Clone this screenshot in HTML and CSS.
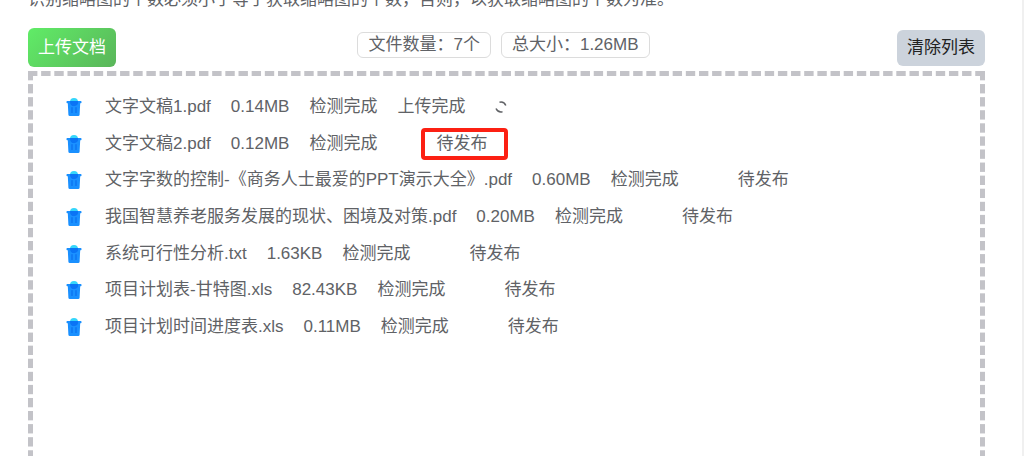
FILE: index.html
```
<!DOCTYPE html>
<html lang="zh-CN">

<head>
    <meta charset="UTF-8">
    <meta name="viewport" content="width=device-width, initial-scale=1.0">
    <title>上传文档</title>
    <link rel="stylesheet" href="styles.css">
</head>

<body>
    <!-- 删除图标 -->
    <svg class="sprite" aria-hidden="true">
        <symbol id="trash" viewBox="0 0 16 20">
            <circle cx="8" cy="5" r="4" fill="#35d6fb" />
            <path d="M1.200 4h13.600a.7.7 0 0 1 .7.7v.9a.7.7 0 0 1-.7.7H14.200l-.6 11.400a1.400 1.400 0 0 1-1.400 1.300H3.800a1.400 1.400 0 0 1-1.400-1.300L1.800 6.300H1.200a.7.7 0 0 1-.7-.7v-.9a.7.7 0 0 1 .7-.7z" fill="#1a90ff" />
            <path d="M4.100 4h7.800a4 4 0 0 1-7.800 2z" fill="#0a74f5" />
            <path d="M6 10.500v5M10 10.500v5" stroke="#0a70ee" stroke-width="1.200" stroke-linecap="round" />
        </symbol>
    </svg>

    <main class="page">
        <p class="tip">识别缩略图的个数必须小于等于获取缩略图的个数，否则，以获取缩略图的个数为准。</p>

        <div class="toolbar">
            <button type="button" class="btn upload">上传文档</button>
            <div class="summary">
                <span class="tag">文件数量：7个</span>
                <span class="tag">总大小：1.26MB</span>
            </div>
            <button type="button" class="btn clear">清除列表</button>
        </div>

        <div class="drop-area">
            <ul class="file-list">
                <li class="file">
                    <button type="button" class="delete" aria-label="删除"><svg><use href="#trash" /></svg></button>
                    <span>文字文稿1.pdf</span>
                    <span>0.14MB</span>
                    <span>检测完成</span>
                    <span>上传完成</span>
                    <svg class="loading" viewBox="0 0 12 12">
                        <path d="M4.500 1.300Q9 .2 10.800 4.500M1 7.500Q3 11.800 7.500 10.700" />
                    </svg>
                </li>
                <li class="file">
                    <button type="button" class="delete" aria-label="删除"><svg><use href="#trash" /></svg></button>
                    <span>文字文稿2.pdf</span>
                    <span>0.12MB</span>
                    <span>检测完成</span>
                    <span class="status marked">待发布</span>
                </li>
                <li class="file">
                    <button type="button" class="delete" aria-label="删除"><svg><use href="#trash" /></svg></button>
                    <span>文字字数的控制-《商务人士最爱的PPT演示大全》.pdf</span>
                    <span>0.60MB</span>
                    <span>检测完成</span>
                    <span class="status">待发布</span>
                </li>
                <li class="file">
                    <button type="button" class="delete" aria-label="删除"><svg><use href="#trash" /></svg></button>
                    <span>我国智慧养老服务发展的现状、困境及对策.pdf</span>
                    <span>0.20MB</span>
                    <span>检测完成</span>
                    <span class="status">待发布</span>
                </li>
                <li class="file">
                    <button type="button" class="delete" aria-label="删除"><svg><use href="#trash" /></svg></button>
                    <span>系统可行性分析.txt</span>
                    <span>1.63KB</span>
                    <span>检测完成</span>
                    <span class="status">待发布</span>
                </li>
                <li class="file">
                    <button type="button" class="delete" aria-label="删除"><svg><use href="#trash" /></svg></button>
                    <span>项目计划表-甘特图.xls</span>
                    <span>82.43KB</span>
                    <span>检测完成</span>
                    <span class="status">待发布</span>
                </li>
                <li class="file">
                    <button type="button" class="delete" aria-label="删除"><svg><use href="#trash" /></svg></button>
                    <span>项目计划时间进度表.xls</span>
                    <span>0.11MB</span>
                    <span>检测完成</span>
                    <span class="status">待发布</span>
                </li>
            </ul>
        </div>
    </main>
</body>

</html>
```

FILE: styles.css
```
* {
    box-sizing: border-box;
}

body {
    margin: 0;
    height: 100vh;
    overflow: hidden;
    border-right: 2px solid #f0f0f0;
    background-color: #fff;
    color: #606266;
    font-family: "Liberation Sans", "Noto Sans CJK SC", sans-serif;
    font-size: 17px;
    line-height: 24px;
}

.sprite {
    display: none;
}

/* 页面滚动到上传区域 */
.page {
    margin-top: -12px;
    padding: 0 37px 0 28px;
}

.tip {
    margin: 0 0 16px;
}

.toolbar {
    display: flex;
    justify-content: space-between;
    align-items: center;
    margin-bottom: 4px;
}

.btn {
    padding: 0 10px;
    border: none;
    border-radius: 6px;
    font: inherit;
    cursor: pointer;
}

.upload {
    height: 39px;
    background-image: linear-gradient(135deg, #60ec67, #5ab55a);
    color: #fff;
}

.clear {
    height: 36px;
    background-color: #ccd3dc;
    color: #222;
}

.summary {
    display: flex;
    gap: 10px;
    margin: 0 6px 6px 0;
}

.tag {
    padding: 0 10px;
    border: 1px solid #dcdcdc;
    border-radius: 6px;
}

/* 虚线边框，用渐变控制线段长度 */
.drop-area {
    --dash: #c3c3c8 0 9px, transparent 9px;
    min-height: 506px;
    padding: 18px 38px;
    background-image:
        linear-gradient(to right, var(--dash)),
        linear-gradient(to bottom, var(--dash)),
        linear-gradient(to bottom, var(--dash));
    background-position: left top, left top, right top;
    background-repeat: repeat-x, repeat-y, repeat-y;
    background-size:
        calc((100% - 9px) / 72) 5px,
        5px calc((100% - 9px) / 38),
        5px calc((100% - 9px) / 38);
}

.file-list {
    display: grid;
    grid-auto-rows: 1fr;
    min-height: 256px;
    margin: 0;
    padding: 0;
    list-style: none;
}

.file {
    display: flex;
    align-items: center;
    gap: 20px;
    white-space: nowrap;
}

.delete {
    width: 16px;
    height: 20px;
    margin-right: 3px;
    padding: 0;
    border: none;
    background: none;
    cursor: pointer;
}

.delete svg {
    display: block;
    width: 100%;
    height: 100%;
}

.status {
    position: relative;
    margin-left: 39px;
}

.marked::after {
    content: "";
    position: absolute;
    inset: -4px -21px -4px -15px;
    border: 4px solid #fc2013;
    border-radius: 4px;
}

.loading {
    width: 12px;
    height: 12px;
    margin-left: 10px;
    fill: none;
    stroke: #606266;
    stroke-width: 1.5;
}
```
